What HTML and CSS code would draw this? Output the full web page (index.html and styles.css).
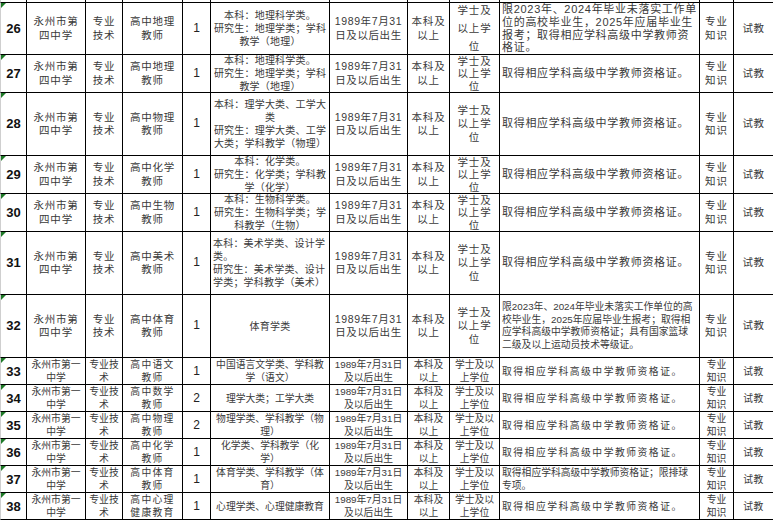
FILE: index.html
```html
<!DOCTYPE html>
<html lang="zh-CN">
<head>
<meta charset="utf-8">
<title>岗位表</title>
<link rel="stylesheet" href="styles.css">
</head>
<body>
<div class="sheet">
<div class="row cut"><div class="cell"></div><div class="cell"></div><div class="cell"></div><div class="cell"></div><div class="cell"></div><div class="cell"></div><div class="cell"></div><div class="cell"></div><div class="cell"></div><div class="cell"></div><div class="cell"></div><div class="cell"></div></div>

<div class="row big">
<div class="cell no">26</div>
<div class="cell unit">永州市第<br>四中学</div>
<div class="cell cat">专业<br>技术</div>
<div class="cell post">高中地理<br>教师</div>
<div class="cell num">1</div>
<div class="cell major">本科：地理科学类。<br>研究生：地理学类；学科<br>教学（地理）</div>
<div class="cell age">1989年7月31<br>日及以后出生</div>
<div class="cell edu">本科及<br>以上</div>
<div class="cell deg spread"><span>学士及</span><span>以上学</span><span>位</span></div>
<div class="cell req top">限2023年、2024年毕业未落实工作单<br>位的高校毕业生，2025年应届毕业生<br>报考；取得相应学科高级中学教师资<br>格证。</div>
<div class="cell exam">专业<br>知识</div>
<div class="cell mode">试教</div>
</div>

<div class="row big">
<div class="cell no">27</div>
<div class="cell unit">永州市第<br>四中学</div>
<div class="cell cat">专业<br>技术</div>
<div class="cell post">高中地理<br>教师</div>
<div class="cell num">1</div>
<div class="cell major">本科：地理科学类。<br>研究生：地理学类；学科<br>教学（地理）</div>
<div class="cell age">1989年7月31<br>日及以后出生</div>
<div class="cell edu">本科及<br>以上</div>
<div class="cell deg top">学士及<br>以上学<br>位</div>
<div class="cell req">取得相应学科高级中学教师资格证。</div>
<div class="cell exam">专业<br>知识</div>
<div class="cell mode">试教</div>
</div>

<div class="row big">
<div class="cell no">28</div>
<div class="cell unit">永州市第<br>四中学</div>
<div class="cell cat">专业<br>技术</div>
<div class="cell post">高中物理<br>教师</div>
<div class="cell num">1</div>
<div class="cell major">本科：理学大类、工学大<br>类<br>研究生：理学大类、工学<br>大类；学科教学（物理）</div>
<div class="cell age">1989年7月31<br>日及以后出生</div>
<div class="cell edu">本科及<br>以上</div>
<div class="cell deg">学士及<br>以上学<br>位</div>
<div class="cell req">取得相应学科高级中学教师资格证。</div>
<div class="cell exam">专业<br>知识</div>
<div class="cell mode">试教</div>
</div>

<div class="row big">
<div class="cell no">29</div>
<div class="cell unit">永州市第<br>四中学</div>
<div class="cell cat">专业<br>技术</div>
<div class="cell post">高中化学<br>教师</div>
<div class="cell num">1</div>
<div class="cell major">本科：化学类。<br>研究生：化学类；学科教<br>学（化学）</div>
<div class="cell age">1989年7月31<br>日及以后出生</div>
<div class="cell edu">本科及<br>以上</div>
<div class="cell deg top">学士及<br>以上学<br>位</div>
<div class="cell req">取得相应学科高级中学教师资格证。</div>
<div class="cell exam">专业<br>知识</div>
<div class="cell mode">试教</div>
</div>

<div class="row big">
<div class="cell no">30</div>
<div class="cell unit">永州市第<br>四中学</div>
<div class="cell cat">专业<br>技术</div>
<div class="cell post">高中生物<br>教师</div>
<div class="cell num">1</div>
<div class="cell major">本科：生物科学类。<br>研究生：生物科学类；学<br>科教学（生物）</div>
<div class="cell age">1989年7月31<br>日及以后出生</div>
<div class="cell edu">本科及<br>以上</div>
<div class="cell deg top">学士及<br>以上学<br>位</div>
<div class="cell req">取得相应学科高级中学教师资格证。</div>
<div class="cell exam">专业<br>知识</div>
<div class="cell mode">试教</div>
</div>

<div class="row big">
<div class="cell no">31</div>
<div class="cell unit">永州市第<br>四中学</div>
<div class="cell cat">专业<br>技术</div>
<div class="cell post">高中美术<br>教师</div>
<div class="cell num">1</div>
<div class="cell major left">本科：美术学类、设计学<br>类。<br>研究生：美术学类、设计<br>学类；学科教学（美术）</div>
<div class="cell age">1989年7月31<br>日及以后出生</div>
<div class="cell edu">本科及<br>以上</div>
<div class="cell deg">学士及<br>以上学<br>位</div>
<div class="cell req">取得相应学科高级中学教师资格证。</div>
<div class="cell exam">专业<br>知识</div>
<div class="cell mode">试教</div>
</div>

<div class="row big">
<div class="cell no">32</div>
<div class="cell unit">永州市第<br>四中学</div>
<div class="cell cat">专业<br>技术</div>
<div class="cell post">高中体育<br>教师</div>
<div class="cell num">1</div>
<div class="cell major">体育学类</div>
<div class="cell age">1989年7月31<br>日及以后出生</div>
<div class="cell edu">本科及<br>以上</div>
<div class="cell deg">学士及<br>以上学<br>位</div>
<div class="cell req dense">限2023年、2024年毕业未落实工作单位的高<br>校毕业生，2025年应届毕业生报考；取得相<br>应学科高级中学教师资格证；具有国家篮球<br>二级及以上运动员技术等级证。</div>
<div class="cell exam">专业<br>知识</div>
<div class="cell mode">试教</div>
</div>

<div class="row small">
<div class="cell no">33</div>
<div class="cell unit">永州市第一<br>中学</div>
<div class="cell cat">专业技<br>术</div>
<div class="cell post">高中语文<br>教师</div>
<div class="cell num">1</div>
<div class="cell major">中国语言文学类、学科教<br>学（语文）</div>
<div class="cell age">1989年7月31日<br>及以后出生</div>
<div class="cell edu">本科及<br>以上</div>
<div class="cell deg">学士及以<br>上学位</div>
<div class="cell req">取得相应学科高级中学教师资格证。</div>
<div class="cell exam">专业<br>知识</div>
<div class="cell mode">试教</div>
</div>

<div class="row small">
<div class="cell no">34</div>
<div class="cell unit">永州市第一<br>中学</div>
<div class="cell cat">专业技<br>术</div>
<div class="cell post">高中数学<br>教师</div>
<div class="cell num">2</div>
<div class="cell major">理学大类；工学大类</div>
<div class="cell age">1989年7月31日<br>及以后出生</div>
<div class="cell edu">本科及<br>以上</div>
<div class="cell deg">学士及以<br>上学位</div>
<div class="cell req">取得相应学科高级中学教师资格证。</div>
<div class="cell exam">专业<br>知识</div>
<div class="cell mode">试教</div>
</div>

<div class="row small">
<div class="cell no">35</div>
<div class="cell unit">永州市第一<br>中学</div>
<div class="cell cat">专业技<br>术</div>
<div class="cell post">高中物理<br>教师</div>
<div class="cell num">2</div>
<div class="cell major">物理学类、学科教学（物<br>理）</div>
<div class="cell age">1989年7月31日<br>及以后出生</div>
<div class="cell edu">本科及<br>以上</div>
<div class="cell deg">学士及以<br>上学位</div>
<div class="cell req">取得相应学科高级中学教师资格证。</div>
<div class="cell exam">专业<br>知识</div>
<div class="cell mode">试教</div>
</div>

<div class="row small">
<div class="cell no">36</div>
<div class="cell unit">永州市第一<br>中学</div>
<div class="cell cat">专业技<br>术</div>
<div class="cell post">高中化学<br>教师</div>
<div class="cell num">1</div>
<div class="cell major">化学类、学科教学（化<br>学）</div>
<div class="cell age">1989年7月31日<br>及以后出生</div>
<div class="cell edu">本科及<br>以上</div>
<div class="cell deg">学士及以<br>上学位</div>
<div class="cell req">取得相应学科高级中学教师资格证。</div>
<div class="cell exam">专业<br>知识</div>
<div class="cell mode">试教</div>
</div>

<div class="row small">
<div class="cell no">37</div>
<div class="cell unit">永州市第一<br>中学</div>
<div class="cell cat">专业技<br>术</div>
<div class="cell post">高中体育<br>教师</div>
<div class="cell num">1</div>
<div class="cell major">体育学类、学科教学（体<br>育）</div>
<div class="cell age">1989年7月31日<br>及以后出生</div>
<div class="cell edu">本科及<br>以上</div>
<div class="cell deg">学士及以<br>上学位</div>
<div class="cell req tight">取得相应学科高级中学教师资格证；限排球<br>专项。</div>
<div class="cell exam">专业<br>知识</div>
<div class="cell mode">试教</div>
</div>

<div class="row small">
<div class="cell no">38</div>
<div class="cell unit">永州市第一<br>中学</div>
<div class="cell cat">专业技<br>术</div>
<div class="cell post">高中心理<br>健康教育</div>
<div class="cell num">1</div>
<div class="cell major">心理学类、心理健康教育</div>
<div class="cell age">1989年7月31日<br>及以后出生</div>
<div class="cell edu">本科及<br>以上</div>
<div class="cell deg">学士及以<br>上学位</div>
<div class="cell req">取得相应学科高级中学教师资格证。</div>
<div class="cell exam">专业<br>知识</div>
<div class="cell mode">试教</div>
</div>
</div>
</body>
</html>
```

FILE: styles.css
```css
html, body {
  margin: 0;
  padding: 0;
  background: #ffffff;
}

body {
  width: 773px;
  height: 521px;
  overflow: hidden;
  font-family: "Liberation Sans", "Noto Sans CJK SC", sans-serif;
  color: #3a3a3a;
}

.sheet {
  display: grid;
  grid-template-columns: 27px 59px 37px 60px 28px 119px 78px 42px 50px 200px 34px 39px;
  grid-template-rows: 3px 52px 38px 63px 38px 38px 63px 63px 27px 27px 27px 27px 27px 27px;
  width: 773px;
}

.row {
  display: contents;
}

.cell {
  border-right: 1px solid #000000;
  border-bottom: 1px solid #000000;
  display: flex;
  align-items: center;
  justify-content: center;
  text-align: center;
  overflow: hidden;
  white-space: nowrap;
  min-width: 0;
  min-height: 0;
}

.cell:first-child {
  border-left: 1px solid #cfcfcf;
}

.cell:last-child {
  border-right: none;
}

.big .cell {
  font-size: 10.5px;
  letter-spacing: 0.8px;
  line-height: 13.5px;
}

.small .cell {
  font-size: 9.8px;
  letter-spacing: 0;
  line-height: 13px;
}

.cell.no {
  position: relative;
  font-weight: bold;
  color: #111111;
}

.cell.no::before {
  content: "";
  position: absolute;
  top: 0;
  left: 0;
  border-top: 5px solid #1f7a28;
  border-right: 5px solid transparent;
}

.big .cell.no,
.small .cell.no {
  font-size: 13px;
  letter-spacing: 0;
}

.big .cell.num,
.small .cell.num {
  font-size: 12px;
  letter-spacing: 0;
  color: #222222;
}

.big .cell.major {
  font-size: 10px;
  letter-spacing: 0.2px;
  line-height: 13px;
}

.big .cell.major.left {
  justify-content: flex-start;
  text-align: left;
  padding-left: 2px;
}

.big .cell.age {
  letter-spacing: 0.6px;
}

.small .cell.post {
  letter-spacing: 1.3px;
}

.cell.req {
  justify-content: flex-start;
  text-align: left;
  padding-left: 2px;
}

.big .cell.req {
  font-size: 11px;
  letter-spacing: 0.7px;
}

.big .cell.req.top {
  line-height: 12.6px;
}

.big .cell.req.dense {
  font-size: 9.8px;
  letter-spacing: 0;
  line-height: 12.5px;
}

.small .cell.req {
  letter-spacing: 1.5px;
}

.small .cell.req.tight {
  letter-spacing: 0;
}

.big .cell.deg.top {
  align-items: flex-start;
  line-height: 12.3px;
  padding-top: 0;
}

.big .cell.deg.spread {
  flex-direction: column;
  justify-content: space-between;
  padding: 1px 0 1px;
}

.big .cell.exam {
  letter-spacing: 1px;
}

.cell.mode {
  letter-spacing: 0.5px;
}
```
